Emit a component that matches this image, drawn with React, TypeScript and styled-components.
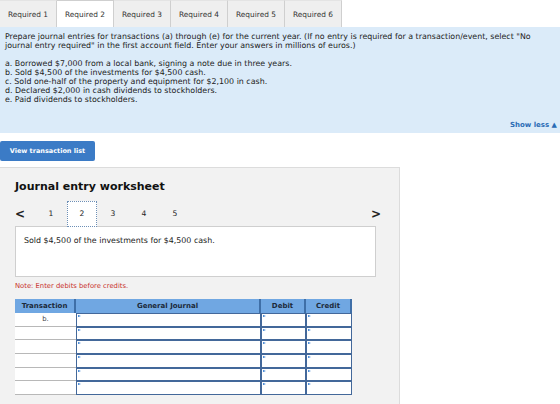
import { createGlobalStyle } from "styled-components";
import styled from "styled-components";

const GlobalStyle = createGlobalStyle`
body {
  margin: 0;
  background: #ffffff;
  font-family: "DejaVu Sans", Verdana, sans-serif;
  color: #222;
}
`;

const Tabs = styled.div`
display: flex;
height: 27px;
`;

const Tab = styled.div<{ $active?: boolean }>`
width: 57px;
box-sizing: border-box;
display: flex;
align-items: center;
justify-content: center;
font-size: 7.4px;
color: #333;
background: ${p => (p.$active ? "#ffffff" : "#efefef")};
border-right: 1px solid #cfcfcf;
border-top: 1px solid ${p => (p.$active ? "#cfcfcf" : "#e4e4e4")};
`;

const Prompt = styled.div`
background: #dbebf9;
padding: 5px 16px 3px 5px;
font-size: 7.9px;
line-height: 9px;
`;

const Items = styled.div`
margin-top: 9px;
`;

const ShowLess = styled.div`
text-align: right;
margin-top: 17px;
margin-right: -13px;
font-weight: bold;
font-size: 7px;
color: #2a6bb5;
`;

const ViewButton = styled.button`
margin-top: 8px;
width: 95px;
height: 20px;
border: none;
border-radius: 2px;
background: #3b7bc6;
color: #fff;
font-family: "DejaVu Sans", sans-serif;
font-weight: bold;
font-size: 6.5px;
padding: 0;
`;

const Worksheet = styled.div`
margin-top: 6px;
width: 400px;
height: 237px;
box-sizing: border-box;
background: #f2f2f2;
border-top: 1px solid #dcdcdc;
border-right: 1px solid #dcdcdc;
padding: 12px 0 0 15px;
`;

const Title = styled.div`
font-weight: bold;
font-size: 11px;
color: #111;
`;

const Pager = styled.div`
display: flex;
align-items: center;
margin-top: 7px;
height: 27px;
width: 366px;
`;

const Arrow = styled.div<{ $right?: boolean }>`
font-size: 12px;
font-weight: bold;
color: #222;
width: 21px;
text-align: ${p => (p.$right ? "right" : "left")};
`;

const Pages = styled.div`
display: flex;
flex: 1;
`;

const Page = styled.div<{ $current?: boolean }>`
width: 30px;
height: 26px;
box-sizing: border-box;
margin-right: 1px;
display: flex;
align-items: center;
justify-content: center;
font-size: 7.6px;
position: relative;
z-index: 1;
background: ${p => (p.$current ? "#fff" : "transparent")};
border: 1px ${p => (p.$current ? "dotted #6d8fb6" : "solid transparent")};
`;

const Description = styled.div`
width: 361px;
height: 51px;
box-sizing: border-box;
margin-top: -1px;
background: #fff;
border: 1px solid #cfcfcf;
padding: 9px 0 0 8px;
font-size: 7.9px;
`;

const Note = styled.div`
margin-top: 5px;
color: #c8312b;
font-size: 6.8px;
`;

const Table = styled.div`
margin-top: 9px;
display: grid;
grid-template-columns: 61px 185px 45px 46px;
`;

const Head = styled.div`
height: 14px;
background: #70a7e2;
border-right: 2px solid #3f6fa7;
display: flex;
align-items: center;
justify-content: center;
font-weight: bold;
font-size: 7px;
color: #1c2a3a;
&:last-child { border-right: 1px solid #6a90bb; }
`;

const TxCell = styled.div`
height: 13.7px;
box-sizing: border-box;
background: #fff;
border-bottom: 1px solid #b8b8b8;
display: flex;
justify-content: center;
padding-top: 2px;
font-size: 6.8px;
color: #444;
`;

const InputCell = styled.div`
height: 13.7px;
box-sizing: border-box;
background: #fff;
border: 1.5px solid #43689a;
border-top-width: 1px;
position: relative;
&::before {
  content: "";
  position: absolute;
  left: 1px;
  top: 1px;
  border-left: 3px solid #2f7ad0;
  border-top: 1.5px solid transparent;
  border-bottom: 1.5px solid transparent;
}
`;

const items = [
  "a. Borrowed $7,000 from a local bank, signing a note due in three years.",
  "b. Sold $4,500 of the investments for $4,500 cash.",
  "c. Sold one-half of the property and equipment for $2,100 in cash.",
  "d. Declared $2,000 in cash dividends to stockholders.",
  "e. Paid dividends to stockholders.",
];

export default function App() {
  const rows = [0, 1, 2, 3, 4, 5];
  return (
    <>
      <GlobalStyle />
      <Tabs>
        {[1, 2, 3, 4, 5, 6].map(n => (
          <Tab key={n} $active={n == 2}>Required {n}</Tab>
        ))}
      </Tabs>
      <Prompt>
        <div>
          Prepare journal entries for transactions (a) through (e) for the current year. (If no entry is required for a transaction/event, select "No journal entry required" in the first account field. Enter your answers in millions of euros.)
        </div>
        <Items>
          {items.map(t => <div key={t}>{t}</div>)}
        </Items>
        <ShowLess>Show less ▲</ShowLess>
      </Prompt>
      <ViewButton>View transaction list</ViewButton>
      <Worksheet>
        <Title>Journal entry worksheet</Title>
        <Pager>
          <Arrow>&lt;</Arrow>
          <Pages>
            {[1, 2, 3, 4, 5].map(n => (
              <Page key={n} $current={n == 2}>{n}</Page>
            ))}
          </Pages>
          <Arrow $right>&gt;</Arrow>
        </Pager>
        <Description>Sold $4,500 of the investments for $4,500 cash.</Description>
        <Note>Note: Enter debits before credits.</Note>
        <Table>
          <Head>Transaction</Head>
          <Head>General Journal</Head>
          <Head>Debit</Head>
          <Head>Credit</Head>
          {rows.map(r => (
            <>
              <TxCell key={"t" + r}>{r == 0 ? "b." : ""}</TxCell>
              <InputCell key={"g" + r} />
              <InputCell key={"d" + r} />
              <InputCell key={"c" + r} />
            </>
          ))}
        </Table>
      </Worksheet>
    </>
  );
}
